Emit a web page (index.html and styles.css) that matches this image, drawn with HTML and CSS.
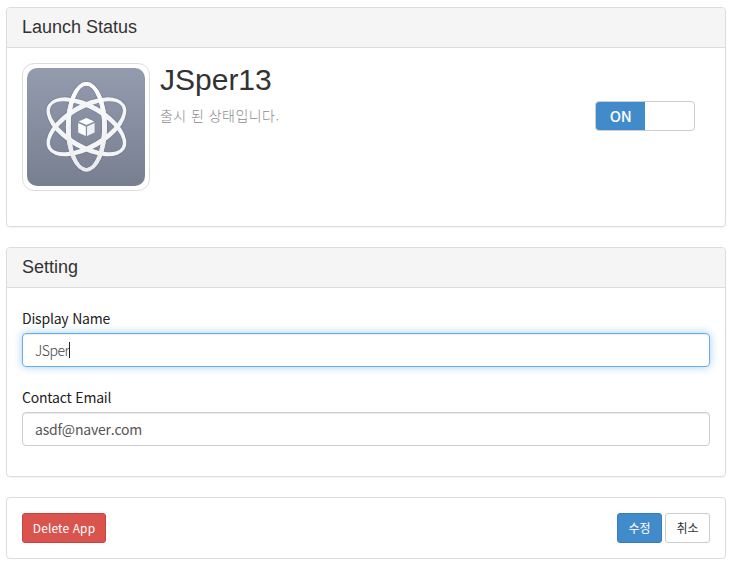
FILE: index.html
```html
<!DOCTYPE html>
<html lang="ko">
<head>
<meta charset="utf-8">
<title>JSper13</title>
<link rel="stylesheet" href="styles.css">
</head>
<body>
<section class="panel">
  <h3 class="panel-heading">Launch Status</h3>
  <div class="panel-body app">
    <div class="thumb">
      <svg viewBox="0 0 118 118" width="118" height="118">
        <defs>
          <linearGradient id="bg" x1="0" y1="0" x2="0" y2="1"><stop offset="0" stop-color="#949bae"/><stop offset="1" stop-color="#777f91"/></linearGradient>
          <linearGradient id="metal" gradientUnits="userSpaceOnUse" x1="0" y1="-45" x2="0" y2="45"><stop offset="0" stop-color="#fff"/><stop offset="1" stop-color="#e8eaed"/></linearGradient>
          <path id="orbit" fill-rule="evenodd" d="M0-44.7A20.5 44.7 0 0 1 0 44.7A20.5 44.7 0 0 1 0-44.7ZM0-41.4A15.8 41.4 0 0 0 0 41.4A15.8 41.4 0 0 0 0-41.4Z"/>
          <path id="wide" fill-rule="evenodd" d="M0-44.2A22.5 44.2 0 0 1 0 44.2A22.5 44.2 0 0 1 0-44.2ZM0-40.9A17.6 40.9 0 0 0 0 40.9A17.6 40.9 0 0 0 0-40.9Z"/>
          <g id="atom">
            <use href="#wide" transform="rotate(60)"/>
            <use href="#wide" transform="rotate(-60)"/>
            <use href="#orbit"/>
          </g>
        </defs>
        <rect width="118" height="118" rx="10" fill="url(#bg)"/>
        <g transform="translate(59.4 58.8)">
          <use href="#atom" fill="none" stroke="#697184" stroke-opacity=".4" stroke-width="1.6"/>
          <use href="#atom" fill="#f4f5f7"/>
          <use href="#orbit" fill="url(#metal)"/>
        </g>
        <g fill="#fff">
          <path d="M59.4 50L67.2 53.6L59.4 57.1L51.6 53.6Z"/>
          <path d="M51.2 55.1L58.8 58.5V68L51.2 64.4Z"/>
          <path fill="#eef0f3" d="M67.6 55.1L60 58.5V68L67.6 64.4Z"/>
        </g>
      </svg>
    </div>
    <div class="app-info">
      <h2 class="app-name">JSper13</h2>
      <p class="app-state">출시 된 상태입니다.</p>
    </div>
    <div class="switch"><span class="switch-on">ON</span><span class="switch-off"></span></div>
  </div>
</section>
<section class="panel">
  <h3 class="panel-heading">Setting</h3>
  <div class="panel-body form">
    <div class="label">Display Name</div>
    <div class="field focused"><span class="typed">JSper</span><i class="caret"></i></div>
    <div class="label">Contact Email</div>
    <div class="field"><span>asdf@naver.com</span></div>
  </div>
</section>
<section class="panel actions">
  <button class="btn danger">Delete App</button>
  <div class="group"><button class="btn primary">수정</button><button class="btn">취소</button></div>
</section>
</body>
</html>
```
FILE: styles.css
```css
* { box-sizing: border-box; }
body {
  margin: 0;
  padding: 7px 13px 0 6px;
  background: #fff;
  color: #333;
  font: 14px/20px "Noto Sans CJK KR", sans-serif;
}
.panel {
  height: 220px;
  margin-bottom: 20px;
  border: 1px solid #ddd;
  border-radius: 4px;
  box-shadow: 0 1px 1px rgba(0, 0, 0, .05);
}
.panel:nth-child(2) { height: 230px; }
.panel-heading {
  height: 40px;
  margin: 0;
  padding: 0 15px;
  border-bottom: 1px solid #ddd;
  border-radius: 3px 3px 0 0;
  background: #f5f5f5;
  font: 18px/38px "Liberation Sans", Arial, sans-serif;
}
.panel-body { padding: 15px; }
.app { display: flex; }
.thumb {
  width: 128px;
  height: 128px;
  padding: 4px;
  border: 1px solid #ddd;
  border-radius: 12px;
}
.thumb svg { display: block; }
.app-info { flex: 1; padding-left: 10px; }
.app-name {
  margin: 0;
  font: 30px/33px "Liberation Sans", Arial, sans-serif;
}
.app-state {
  margin: 9px 0 0;
  color: #8c8c8c;
  font-weight: 300;
  letter-spacing: .45px;
}
.switch {
  display: flex;
  width: 100px;
  height: 30px;
  margin: 38px 15px 0 0;
  border: 1px solid #ccc;
  border-radius: 4px;
  overflow: hidden;
}
.switch-on {
  width: 49px;
  background: #428bca;
  color: #fff;
  font-size: 15px;
  font-weight: 500;
  line-height: 28px;
  letter-spacing: -.3px;
  text-align: center;
}
.form { padding-top: 20px; }
.label {
  height: 20px;
  margin-bottom: 5px;
  color: #222;
  letter-spacing: -.2px;
}
.field {
  display: flex;
  align-items: center;
  height: 34px;
  margin-bottom: 20px;
  padding: 0 12px;
  border: 1px solid #ccc;
  border-radius: 4px;
  box-shadow: inset 0 1px 1px rgba(0, 0, 0, .075);
  color: #555;
  letter-spacing: -.2px;
}
.typed { font-weight: 300; letter-spacing: -.45px; color: #444; }
.focused {
  border-color: #66afe9;
  box-shadow: inset 0 1px 1px rgba(0, 0, 0, .075), 0 0 8px rgba(102, 175, 233, .6);
}
.caret { width: 1px; height: 16px; background: #222; }
.actions {
  display: flex;
  justify-content: space-between;
  height: 62px;
  margin: 0;
  padding: 15px;
}
.group { display: flex; gap: 3px; }
.btn {
  width: 45px;
  height: 30px;
  padding: 0;
  border: 1px solid #ccc;
  border-radius: 3px;
  background: #fff;
  color: #333;
  font: 12px/18px "Noto Sans CJK KR", sans-serif;
}
.danger { width: 84px; border-color: #d43f3a; background: #d9534f; color: #fff; letter-spacing: .1px; }
.primary { border-color: #357ebd; background: #428bca; color: #fff; }
```
